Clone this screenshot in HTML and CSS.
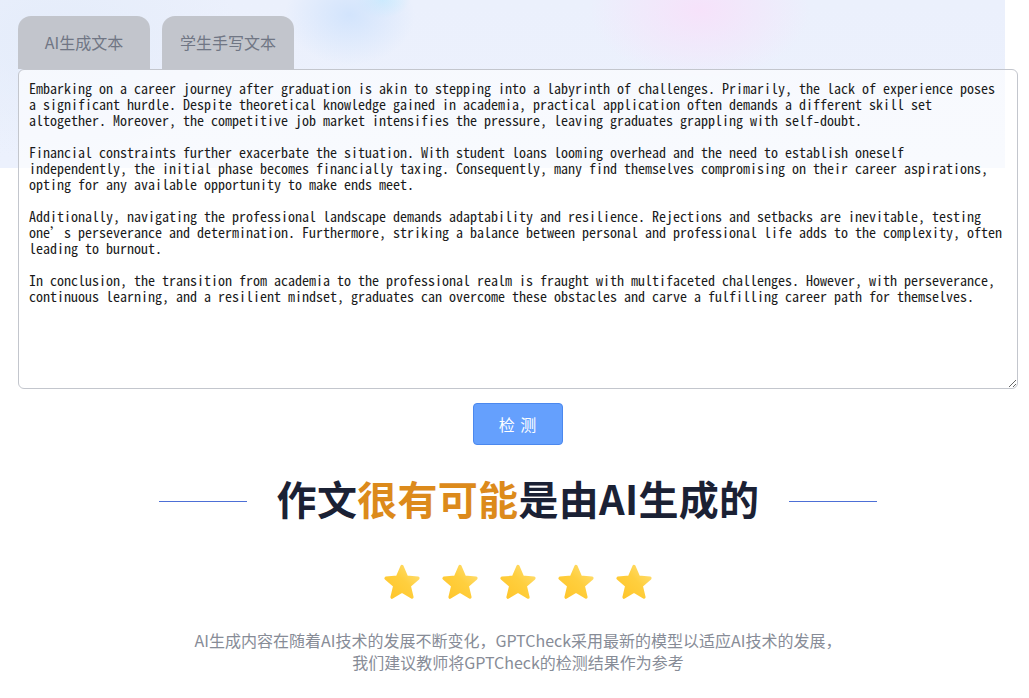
FILE: index.html
```html
<!DOCTYPE html>
<html lang="zh-CN">
<head>
<meta charset="utf-8">
<title>GPTCheck</title>
<link rel="stylesheet" href="styles.css">
</head>
<body>
<div class="page">
  <div class="tabs">
    <div class="tab">AI生成文本</div>
    <div class="tab">学生手写文本</div>
  </div>
  <textarea class="essay" spellcheck="false">Embarking on a career journey after graduation is akin to stepping into a labyrinth of challenges. Primarily, the lack of experience poses
a significant hurdle. Despite theoretical knowledge gained in academia, practical application often demands a different skill set
altogether. Moreover, the competitive job market intensifies the pressure, leaving graduates grappling with self-doubt.

Financial constraints further exacerbate the situation. With student loans looming overhead and the need to establish oneself
independently, the initial phase becomes financially taxing. Consequently, many find themselves compromising on their career aspirations,
opting for any available opportunity to make ends meet.

Additionally, navigating the professional landscape demands adaptability and resilience. Rejections and setbacks are inevitable, testing
one’s perseverance and determination. Furthermore, striking a balance between personal and professional life adds to the complexity, often
leading to burnout.

In conclusion, the transition from academia to the professional realm is fraught with multifaceted challenges. However, with perseverance,
continuous learning, and a resilient mindset, graduates can overcome these obstacles and carve a fulfilling career path for themselves.</textarea>
  <div class="actions">
    <button class="detect">检 测</button>
  </div>
  <div class="result-title">
    <span class="rule"></span>
    <h2 class="verdict">作文<span class="hl">很有可能</span>是由AI生成的</h2>
    <span class="rule"></span>
  </div>
  <div class="stars">
    <svg class="star" viewBox="0 0 40 40"><defs><linearGradient id="g" x1="1" y1="0" x2="0" y2="1"><stop offset="0" stop-color="#ffe07a"/><stop offset="0.45" stop-color="#ffcf3e"/><stop offset="1" stop-color="#ffc52a"/></linearGradient></defs><path d="M20 3.5 L24.6 14.2 L36 15.2 L27.3 22.8 L30 34.2 L20 28.1 L10 34.2 L12.7 22.8 L4 15.2 L15.4 14.2 Z" fill="url(#g)" stroke="url(#g)" stroke-width="3.2" stroke-linejoin="round"/></svg>
    <svg class="star" viewBox="0 0 40 40"><path d="M20 3.5 L24.6 14.2 L36 15.2 L27.3 22.8 L30 34.2 L20 28.1 L10 34.2 L12.7 22.8 L4 15.2 L15.4 14.2 Z" fill="url(#g)" stroke="url(#g)" stroke-width="3.2" stroke-linejoin="round"/></svg>
    <svg class="star" viewBox="0 0 40 40"><path d="M20 3.5 L24.6 14.2 L36 15.2 L27.3 22.8 L30 34.2 L20 28.1 L10 34.2 L12.7 22.8 L4 15.2 L15.4 14.2 Z" fill="url(#g)" stroke="url(#g)" stroke-width="3.2" stroke-linejoin="round"/></svg>
    <svg class="star" viewBox="0 0 40 40"><path d="M20 3.5 L24.6 14.2 L36 15.2 L27.3 22.8 L30 34.2 L20 28.1 L10 34.2 L12.7 22.8 L4 15.2 L15.4 14.2 Z" fill="url(#g)" stroke="url(#g)" stroke-width="3.2" stroke-linejoin="round"/></svg>
    <svg class="star" viewBox="0 0 40 40"><path d="M20 3.5 L24.6 14.2 L36 15.2 L27.3 22.8 L30 34.2 L20 28.1 L10 34.2 L12.7 22.8 L4 15.2 L15.4 14.2 Z" fill="url(#g)" stroke="url(#g)" stroke-width="3.2" stroke-linejoin="round"/></svg>
  </div>
  <p class="note">AI生成内容在随着AI技术的发展不断变化，GPTCheck采用最新的模型以适应AI技术的发展，<br>我们建议教师将GPTCheck的检测结果作为参考</p>
</div>
</body>
</html>
```
FILE: styles.css
```css
html, body {
  margin: 0;
  padding: 0;
  background: #ffffff;
}
body {
  font-family: "Noto Sans CJK SC", "Noto Sans", sans-serif;
  overflow: hidden;
}
.page {
  width: 1000px;
  padding: 16px 11px 0 18px;
  min-height: 682px;
  background:
    radial-gradient(ellipse 65px 50px at 350px 15px, rgba(206, 226, 252, 0.85), rgba(206, 226, 252, 0) 100%),
    radial-gradient(ellipse 28px 18px at 382px 0px, rgba(196, 238, 255, 0.8), rgba(196, 238, 255, 0) 100%),
    radial-gradient(ellipse 110px 70px at 700px 10px, rgba(246, 226, 250, 1), rgba(246, 226, 250, 0) 100%),
    radial-gradient(ellipse 180px 120px at 60px 40px, rgba(228, 236, 250, 1), rgba(228, 236, 250, 0) 100%),
    linear-gradient(#ebf0fc, #ecf1fd);
  background-size: 1005px 168px;
  background-repeat: no-repeat;
}
.tabs {
  display: flex;
  gap: 12px;
  height: 53px;
}
.tab {
  width: 132px;
  height: 53px;
  border-radius: 13px 13px 0 0;
  background: #c2c5cc;
  color: #707684;
  font-size: 16px;
  display: flex;
  align-items: center;
  justify-content: center;
  padding-bottom: 2px;
  box-sizing: border-box;
}
.essay {
  display: block;
  box-sizing: border-box;
  width: 1000px;
  height: 320px;
  margin: 0;
  padding: 10px 10px;
  border: 1px solid #c3c6cd;
  border-radius: 6px;
  background: rgba(255, 255, 255, 0.62);
  color: #1a1a1a;
  font-family: "Noto Sans Mono CJK SC", "Liberation Mono", monospace;
  font-size: 14px;
  line-height: 16px;
  white-space: pre-wrap;
  overflow: hidden;
  outline: none;
}
.actions {
  display: flex;
  justify-content: center;
  margin-top: 14px;
}
.detect {
  width: 90px;
  height: 42px;
  border: 1px solid #4b88ee;
  border-radius: 4px;
  background: #65a0fd;
  color: #ffffff;
  font-family: "Noto Sans CJK SC", sans-serif;
  font-size: 16px;
  letter-spacing: 1px;
  padding: 0;
}
.result-title {
  display: flex;
  align-items: center;
  justify-content: center;
  gap: 30px;
  margin-top: 25px;
}
.rule {
  width: 88px;
  height: 1px;
  margin-top: 6px;
  background: #4d6fd6;
}
.verdict {
  margin: 0;
  font-size: 40px;
  line-height: 56px;
  font-weight: 700;
  color: #1b2134;
  letter-spacing: 0.3px;
}
.hl {
  color: #dc8a1b;
}
.stars {
  display: flex;
  justify-content: center;
  gap: 18px;
  margin-top: 37px;
}
.star {
  width: 40px;
  height: 40px;
}
.note {
  margin: 26px 0 0;
  text-align: center;
  font-size: 16px;
  line-height: 22px;
  color: #878c97;
}
```
